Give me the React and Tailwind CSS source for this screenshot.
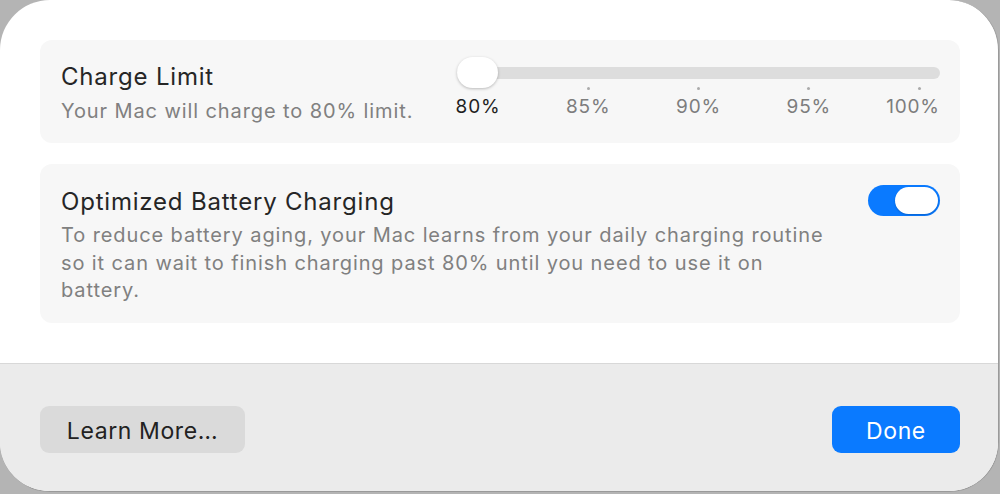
export default function App() {
  const stops = ["80%", "85%", "90%", "95%", "100%"];

  return (
    <div className="w-[1000px] h-[494px] bg-[#b4b4b4] overflow-hidden" style={{ fontFamily: "Inter, 'Noto Sans', sans-serif" }}>
      <div className="w-[999px] h-[492px] rounded-[50px] overflow-hidden flex flex-col bg-white border-r border-b border-[#9a9a9a]">
        {/* Settings cards */}
        <div className="h-[364px] flex flex-col gap-[21px] pl-[40px] pr-[38px] pt-[40px] border-b border-[#d8d8d8]">
          <div className="h-[103px] rounded-[12px] bg-[#f7f7f7] flex items-start justify-between pl-[21px] pr-[20px]">
            <div className="pt-[22px]">
              <div className="text-[24px] leading-[30px] text-[#262626] tracking-[0.8px]">Charge Limit</div>
              <div className="text-[20px] leading-[26px] text-[#808080] tracking-[0.9px] mt-[6px]">Your Mac will charge to 80% limit.</div>
            </div>
            <div className="w-[483px] pt-[17px]">
              {/* slider */}
              <div className="relative h-[32px] flex items-center">
                <div className="w-full h-[12px] rounded-full bg-[#dddddd]" />
                <div className="absolute left-0 top-0 w-[41px] h-[31px] rounded-full bg-white shadow-[0_1px_3px_rgba(0,0,0,0.25)]" />
              </div>
              <div className="flex justify-between mx-[21px] -mt-[2px]">
                {stops.map((s, i) => (
                  <div key={s} className="w-0 flex flex-col items-center">
                    <div className={i === 0 ? "w-[3px] h-[3px]" : "w-[3px] h-[3px] rounded-full bg-[#ababab]"} />
                    <span
                      className={
                        i === 0
                          ? "whitespace-nowrap text-[19px] leading-[22px] tracking-[0.8px] mt-[6px] text-[#1f1f1f]"
                          : i === 4
                          ? "whitespace-nowrap text-[19px] leading-[22px] tracking-[0.8px] mt-[6px] text-[#7d7d7d] mr-[12px]"
                          : "whitespace-nowrap text-[19px] leading-[22px] tracking-[0.8px] mt-[6px] text-[#7d7d7d]"
                      }
                    >
                      {s}
                    </span>
                  </div>
                ))}
              </div>
            </div>
          </div>

          <div className="h-[159px] rounded-[12px] bg-[#f7f7f7] flex items-start justify-between pl-[21px] pr-[20px]">
            <div className="pt-[23px] w-[772px]">
              <div className="text-[24px] leading-[30px] text-[#262626] tracking-[0.8px]">Optimized Battery Charging</div>
              <div className="text-[20px] leading-[27.5px] text-[#808080] tracking-[0.9px] mt-[5px]">
                To reduce battery aging, your Mac learns from your daily charging routine so it can wait to finish charging past 80% until you need to use it on battery.
              </div>
            </div>
            <div className="mt-[21px] w-[72px] h-[31px] rounded-full bg-[#0a7aff] flex items-center justify-end pr-[2px]">
              <div className="w-[43px] h-[27px] rounded-full bg-white shadow-[0_1px_2px_rgba(0,0,0,0.2)]" />
            </div>
          </div>
        </div>

        {/* Footer */}
        <div className="flex-1 bg-[#ebebeb] flex items-start justify-between pl-[40px] pr-[38px] pt-[42px]">
          <button className="h-[47px] w-[205px] rounded-[9px] bg-[#dadada] text-[23px] tracking-[0.6px] text-[#222222] pt-[3px]">Learn More…</button>
          <button className="h-[47px] w-[128px] rounded-[9px] bg-[#0a7aff] text-[23px] tracking-[0.6px] text-white pt-[3px]">Done</button>
        </div>
      </div>
    </div>
  );
}
